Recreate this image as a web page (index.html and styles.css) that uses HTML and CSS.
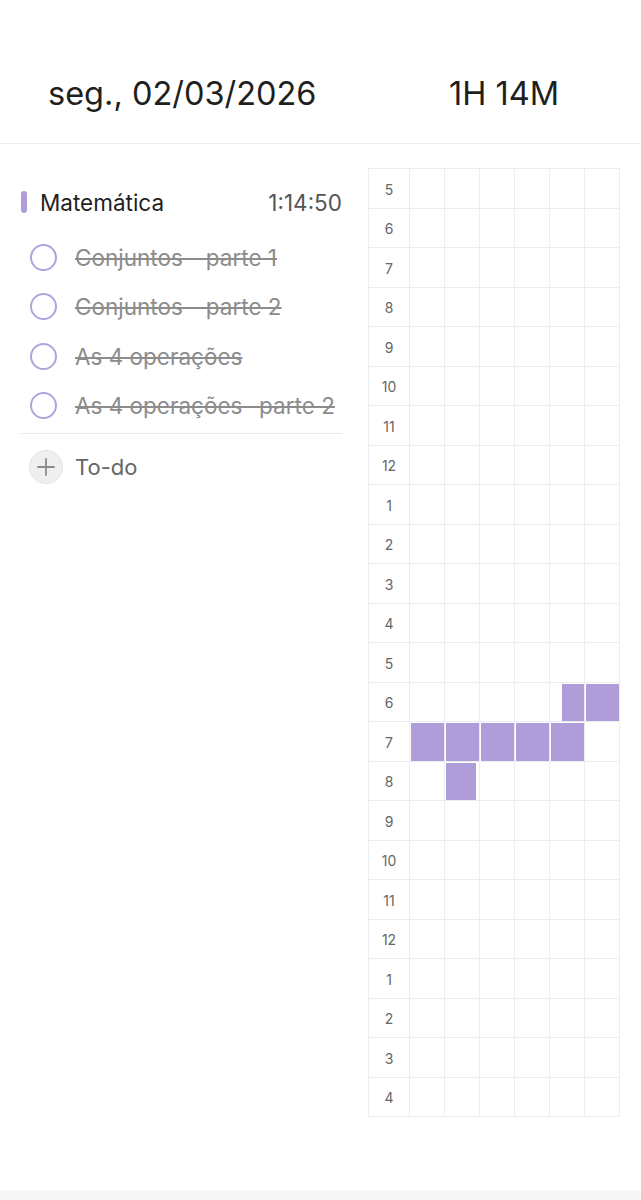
FILE: index.html
```html
<!DOCTYPE html>
<html lang="pt-BR">
<head>
    <meta charset="UTF-8">
    <meta name="viewport" content="width=device-width, initial-scale=1.0">
    <title>Dia</title>
    <link rel="stylesheet" href="styles.css">
</head>
<body>
    <header class="day-header">
        <span class="day-date">seg., 02/03/2026</span>
        <span class="day-total">1H 14M</span>
    </header>

    <main class="day-body">
        <section class="tasks">
            <div class="subject">
                <span class="subject-bar"></span>
                <span class="subject-name">Matemática</span>
                <span class="subject-time">1:14:50</span>
            </div>
            <ul class="todo-list">
                <li class="todo done"><span class="check"></span>Conjuntos - parte 1</li>
                <li class="todo done"><span class="check"></span>Conjuntos - parte 2</li>
                <li class="todo done"><span class="check"></span>As 4 operações</li>
                <li class="todo done"><span class="check"></span>As 4 operações- parte 2</li>
            </ul>
            <div class="add-todo">
                <span class="add-icon">
                    <svg width="20" height="20" viewBox="0 0 20 20"><path d="M10 2v16M2 10h16" stroke="#8a8a8a" stroke-width="1.8" stroke-linecap="round"/></svg>
                </span>
                To-do
            </div>
        </section>

        <section class="timeline" id="timeline"></section>
    </main>

    <footer class="bottom-bar"></footer>

    <script>
        // hours shown, 5am through 4am next day
        const hours = [5,6,7,8,9,10,11,12,1,2,3,4,5,6,7,8,9,10,11,12,1,2,3,4];
        // filled 10-minute slots: row index, column, start %, width %
        const sessions = [
            [13, 4, 33, 67], [13, 5, 0, 100],
            [14, 0, 0, 100], [14, 1, 0, 100], [14, 2, 0, 100], [14, 3, 0, 100], [14, 4, 0, 100],
            [15, 1, 0, 90]
        ];
        const timeline = document.getElementById('timeline');
        hours.forEach((h, row) => {
            const label = document.createElement('div');
            label.className = 'hour-label';
            label.textContent = h;
            timeline.appendChild(label);
            for (let col = 0; col < 6; col++) {
                const cell = document.createElement('div');
                cell.className = 'slot';
                sessions.filter(s => s[0] === row && s[1] === col).forEach(s => {
                    const fill = document.createElement('span');
                    fill.className = 'slot-fill';
                    fill.style.left = s[2] + '%';
                    fill.style.width = s[3] + '%';
                    cell.appendChild(fill);
                });
                timeline.appendChild(cell);
            }
        });
    </script>
</body>
</html>
```

FILE: styles.css
```css
:root {
    --purple: #ae9dd9;
    --line: #ececf3;
    --text: #1f1f1f;
    --muted: #8c8c8c;
}

body {
    margin: 0;
    background: #fff;
    font-family: Inter, "Noto Sans", sans-serif;
    color: var(--text);
    width: 641px;
    height: 1200px;
    position: relative;
    overflow: hidden;
}

.day-header {
    height: 144px;
    border-bottom: 1px solid #eeeeee;
    display: flex;
    align-items: center;
    padding-left: 48px;
    padding-top: 44px;
    box-sizing: border-box;
}

.day-date {
    font-size: 32.5px;
    width: 401px;
}

.day-total {
    font-size: 32.5px;
}

.day-body {
    display: flex;
    padding-top: 24px;
}

.tasks {
    width: 321px;
    margin-left: 21px;
    padding-top: 21px;
}

.subject {
    display: flex;
    align-items: center;
    height: 26px;
}

.subject-bar {
    width: 6px;
    height: 22px;
    border-radius: 3px;
    background: var(--purple);
    margin-right: 13px;
}

.subject-name {
    font-size: 22.5px;
    flex: 1;
}

.subject-time {
    font-size: 22.5px;
    color: #555;
}

.todo-list {
    list-style: none;
    margin: 18px 0 0;
    padding: 0 0 3px;
    border-bottom: 1px solid #e8e8e8;
}

.todo {
    display: flex;
    align-items: center;
    height: 49.3px;
    font-size: 22.5px;
    color: var(--muted);
    padding-left: 9px;
}

.todo.done {
    text-decoration: line-through;
    text-decoration-thickness: 1.5px;
}

.check {
    width: 23px;
    height: 23px;
    border: 2px solid #b3a3dd;
    border-radius: 50%;
    margin-right: 18px;
    flex-shrink: 0;
}

.add-todo {
    display: flex;
    align-items: center;
    margin-top: 16px;
    padding-left: 8px;
    font-size: 22px;
    color: #666;
}

.add-icon {
    width: 34px;
    height: 34px;
    border-radius: 50%;
    background: #efefef;
    border: 1px solid #e3e3e3;
    box-sizing: border-box;
    display: flex;
    align-items: center;
    justify-content: center;
    margin-right: 12px;
}

.timeline {
    margin-left: 26px;
    width: 252px;
    display: grid;
    grid-template-columns: 41px repeat(6, 1fr);
    grid-auto-rows: 39.5px;
    border-top: 1px solid var(--line);
    border-left: 1px solid var(--line);
    box-sizing: border-box;
}

.hour-label,
.slot {
    border-right: 1px solid var(--line);
    border-bottom: 1px solid var(--line);
    position: relative;
}

.hour-label {
    display: flex;
    align-items: center;
    justify-content: center;
    font-size: 14px;
    color: #666;
    padding-top: 2px;
}

.slot-fill {
    position: absolute;
    top: 1px;
    bottom: 0;
    background: var(--purple);
    box-sizing: border-box;
    border-left: 1px solid #fff;
}

.bottom-bar {
    position: absolute;
    left: 0;
    right: 0;
    bottom: 0;
    height: 10px;
    background: #f6f6f6;
}
```
